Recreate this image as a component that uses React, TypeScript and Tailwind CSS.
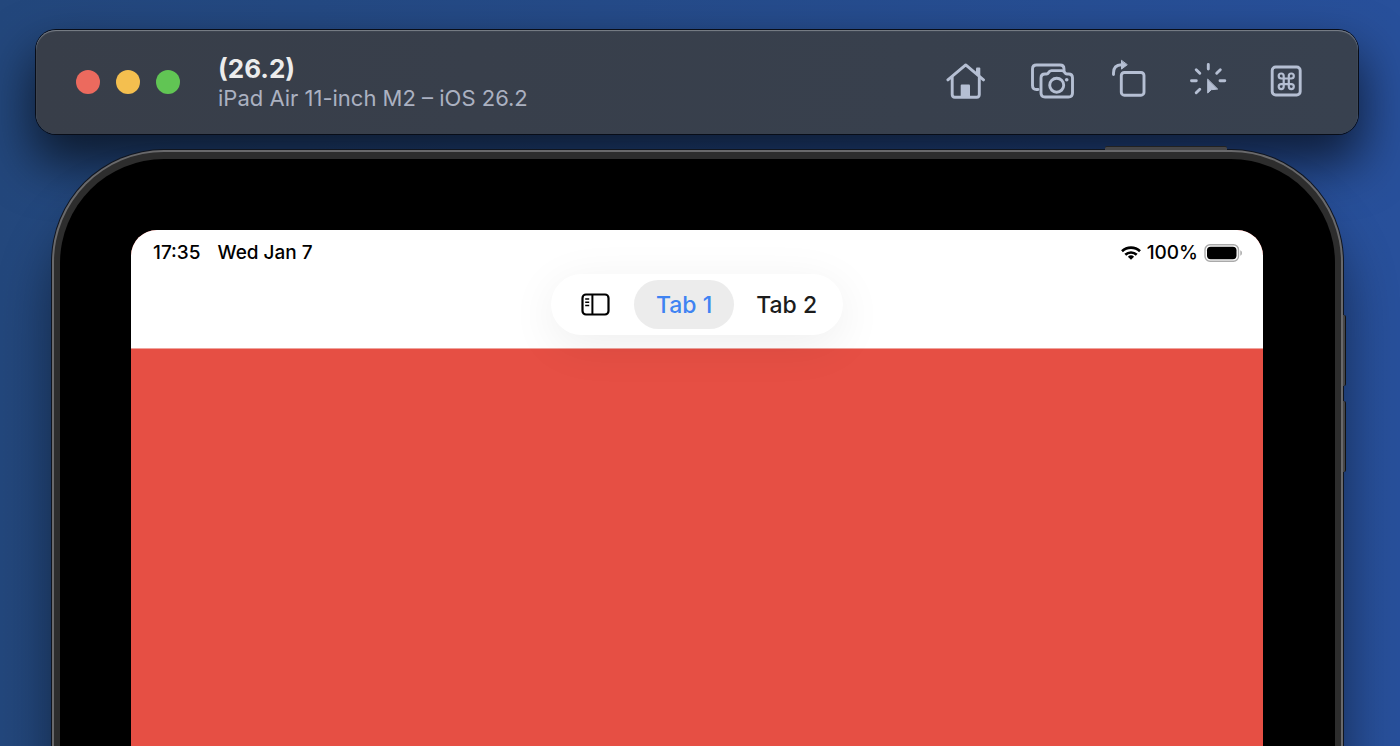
import type { ReactNode } from "react";
import { useState } from "react";

const tabs = ["Tab 1", "Tab 2"];

function ToolButton({ label, width = 44, children }: { label: string; width?: number; children: ReactNode }) {
  return (
    <button type="button" aria-label={label} className="text-[#b5bfd3]">
      <svg
        width={width}
        height={48}
        viewBox={`0 -0.5 ${width} 48`}
        fill="none"
        stroke="currentColor"
        strokeWidth={2.9}
        strokeLinecap="round"
        strokeLinejoin="round"
      >
        {children}
      </svg>
    </button>
  );
}

function Toolbar() {
  return (
    <header className="ml-9 mr-[42px] mt-[30px] flex h-[104px] shrink-0 items-center rounded-[20px] bg-linear-to-r from-[#383e49] to-[#38414f] pl-10 pr-[50px] shadow-[0_0_0_1px_#080d18,inset_0_1px_1px_#7d828a,0_26px_50px_4px_rgba(0,0,0,0.62)]">
      <div className="flex gap-4">
        <button type="button" aria-label="Close" className="size-6 rounded-full bg-[#ec6a5e]" />
        <button type="button" aria-label="Minimize" className="size-6 rounded-full bg-[#f4bf4f]" />
        <button type="button" aria-label="Zoom" className="size-6 rounded-full bg-[#61c554]" />
      </div>
      <div className="ml-[38px] whitespace-nowrap pt-[2px]">
        <h1 className="text-[26px] font-bold leading-[30px] text-[#ececec]">(26.2)</h1>
        <p className="text-[22px] leading-[28px] text-[#abb1c1]">iPad Air 11-inch M2 – iOS 26.2</p>
      </div>
      <div className="ml-auto flex gap-[34px]">
        <ToolButton label="Home" width={50}>
          <path d="M1.9 21.4 19.7 6.4l17.8 15" />
          <path d="M6.2 19v17q0 2.7 2.7 2.7h21.8q2.6 0 2.6-2.7V19" />
          <path d="M14.7 38.5V27q0-1 1-1H23q1 0 1 1v11.5z" fill="currentColor" stroke="none" />
          <path d="M30 16v-6q0-1 1-1h2.3q1 0 1 1v9.5z" fill="currentColor" stroke="none" />
        </ToolButton>
        <ToolButton label="Screenshot">
          <path d="M8 31H6.5q-4 0-4-4V10.5q0-4 4-4H30q4 0 4 4V12" />
          <path d="M11 34.5v-15q0-4 4-4h1.5q1.3 0 2-1.2l.8-1.2q.8-1 2.2-1h10.4q1.4 0 2.2 1l.8 1.2q.7 1.2 2 1.2h1.6q4 0 4 4v15q0 4-4 4H15q-4 0-4-4z" />
          <circle cx={26.7} cy={26.7} r={7} />
          <circle cx={36.7} cy={21.3} r={1.8} fill="currentColor" stroke="none" />
        </ToolButton>
        <ToolButton label="Rotate">
          <rect x={13.3} y={14} width={22.7} height={22.7} rx={3} />
          <path d="M5.5 16v-1.500q0-8 8-8.200h1" />
          <path d="M13.5 2.200v8.400l5.500-4.200z" fill="currentColor" strokeWidth={1} />
        </ToolButton>
        <ToolButton label="Show touches">
          <path d="M22.3 6v4.5M10.2 11.2l3.6 3.6M34.3 11.2l-3.6 3.6M5.5 22.3h4.8M34 22.3h4.8M10.2 34.3l3.6-3.6" />
          <path d="M21.7 21v13.5l3.6-3.3 6-.6z" fill="currentColor" strokeWidth={1} />
        </ToolButton>
        <ToolButton label="Keyboard shortcuts">
          <rect x={8.2} y={8.5} width={28} height={28} rx={3.5} />
          <path
            d="M24.8 17.5v10.6a2.5 2.5 0 1 0 2.5-2.5H17.2a2.5 2.5 0 1 0 2.5 2.5V17.5a2.5 2.5 0 1 0-2.5 2.5h10.1a2.5 2.5 0 1 0-2.5-2.5"
            strokeWidth={2.2}
          />
        </ToolButton>
      </div>
    </header>
  );
}

function StatusBar() {
  return (
    <div className="flex h-11 items-center justify-between pl-[22px] pr-[20px] pt-[2px] text-[19px] font-medium text-black">
      <div className="flex gap-[17px]">
        <span>17:35</span>
        <span>Wed Jan 7</span>
      </div>
      <div className="flex items-center gap-[6px]">
        <svg width={20} height={15} viewBox="0 0 20 15" fill="none" stroke="black" strokeWidth={2.6}>
          <path d="M1 5.3a12.9 12.9 0 0 1 18 0" />
          <path d="M4.3 8.8a8.2 8.2 0 0 1 11.4 0" />
          <path d="M10 13.8 6.900 10.8a4.5 4.5 0 0 1 6.2 0z" fill="black" stroke="none" />
        </svg>
        <span>100%</span>
        <svg width={39} height={18} viewBox="0 0 39 18">
          <rect x={1} y={0.8} width={33.5} height={16.4} rx={5} fill="white" stroke="#aaa" strokeWidth={1.4} />
          <rect x={3} y={2.7} width={29.5} height={12.5} rx={3.6} fill="black" />
          <path d="M36.3 6.2q1.7.8 1.7 2.8t-1.700 2.8z" fill="#aaa" />
        </svg>
      </div>
    </div>
  );
}

function TabBar() {
  const [active, setActive] = useState("Tab 1");

  return (
    <nav className="mx-auto flex h-[61px] w-fit items-center rounded-full bg-white pl-[30px] pr-1 shadow-[0_10px_48px_rgba(0,0,0,0.07)]">
      <button type="button" aria-label="Toggle sidebar" className="mr-6">
        <svg width={29} height={23} viewBox="0 0 29 23" fill="none" stroke="black" strokeWidth={2.2}>
          <rect x={1.5} y={1.5} width={26} height={20} rx={3.5} />
          <path d="M11.4 1.5v20" strokeWidth={2} />
          <path d="M4.2 6h4M4.2 9.2h4M4.2 12.4h4" strokeWidth={1.5} />
        </svg>
      </button>
      {tabs.map((tab) => (
        <button
          key={tab}
          type="button"
          onClick={() => setActive(tab)}
          className={`h-[49px] rounded-full px-[22px] pt-[2px] text-[23px] font-medium ${
            active === tab ? "bg-[#ececec] text-[#3f83f2]" : "text-[#1c1c1c]"
          }`}
        >
          {tab}
        </button>
      ))}
    </nav>
  );
}

function Device() {
  return (
    <div className="relative ml-[52px] mr-[57px] mt-4 flex flex-1 flex-col rounded-t-[112px] border-x-2 border-t-2 border-[#69696b] bg-[#2d2d2d] shadow-[0_0_0_1px_#10151f,0_50px_50px_4px_rgba(0,0,0,0.42)]">
      {/* hardware buttons */}
      <div className="absolute right-[114px] -top-[6px] h-1 w-[122px] rounded-t-xs border-t border-[#222] bg-[#464648]" />
      <div className="absolute -right-[5px] top-[163px] h-[71px] w-[3px] rounded-r-xs border-r border-[#111] bg-[#464648]" />
      <div className="absolute -right-[5px] top-[249px] h-[71px] w-[3px] rounded-r-xs border-r border-[#111] bg-[#464648]" />

      <div className="mx-[6px] mt-[7px] flex flex-1 flex-col rounded-t-[104px] bg-black pl-[71px] pr-[72px] pt-[71px]">
        <div className="flex flex-1 flex-col overflow-hidden rounded-t-[26px] bg-[#e64f44]">
          <div className="h-[119px] border-b border-[#efa39d] bg-white">
            <StatusBar />
            <TabBar />
          </div>
          <main className="flex-1" />
        </div>
      </div>
    </div>
  );
}

export default function App() {
  return (
    <div className="flex h-screen flex-col overflow-hidden bg-linear-to-r from-[#23477c] to-[#28509b] font-['Inter','Liberation_Sans',sans-serif]">
      <Toolbar />
      <Device />
    </div>
  );
}
